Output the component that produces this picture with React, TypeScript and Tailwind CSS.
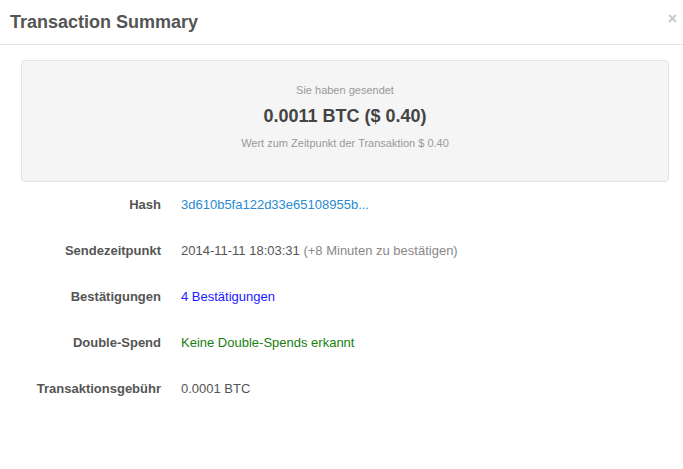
export default function App() {
  const rows = [
    { label: 'Hash', value: <span className="text-[#2a8ad0]">3d610b5fa122d33e65108955b...</span> },
    {
      label: 'Sendezeitpunkt',
      value: (
        <span className="text-[#555]">
          2014-11-11 18:03:31 <span className="text-[#888]">(+8 Minuten zu bestätigen)</span>
        </span>
      ),
    },
    { label: 'Bestätigungen', value: <span className="text-[#1a1aff]">4 Bestätigungen</span> },
    { label: 'Double-Spend', value: <span className="text-[#17800f]">Keine Double-Spends erkannt</span> },
    { label: 'Transaktionsgebühr', value: <span className="text-[#555]">0.0001 BTC</span> },
  ]

  return (
    <div className="w-[683px] h-[469px] bg-white font-['Liberation_Sans',Arial,sans-serif] overflow-hidden">
      <div className="h-[45px] border-b border-[#e5e5e5] flex items-center justify-between pl-[10px] pr-[6px]">
        <h1 className="text-[18px] font-bold text-[#555]">Transaction Summary</h1>
        <span className="text-[16px] font-bold text-[#c8c8c8] leading-none -mt-[6px]">×</span>
      </div>

      <div className="pt-[15px]">
        <div className="ml-[21px] w-[648px] h-[122px] bg-[#f5f5f5] border border-[#e3e3e3] rounded-[4px] flex flex-col items-center pt-[22px]">
          <div className="text-[11px] text-[#999] leading-[14px]">Sie haben gesendet</div>
          <div className="mt-[8px] text-[18px] font-bold text-[#444] leading-[22px]">0.0011 BTC ($ 0.40)</div>
          <div className="mt-[9px] text-[11px] text-[#999] leading-[14px]">Wert zum Zeitpunkt der Transaktion $ 0.40</div>
        </div>

        <div className="flex flex-col">
          {rows.map((r) => (
            <div key={r.label} className="h-[46px] flex items-center text-[13px]">
              <div className="w-[161px] text-right font-bold text-[#555]">{r.label}</div>
              <div className="pl-[20px]">{r.value}</div>
            </div>
          ))}
        </div>
      </div>
    </div>
  )
}
